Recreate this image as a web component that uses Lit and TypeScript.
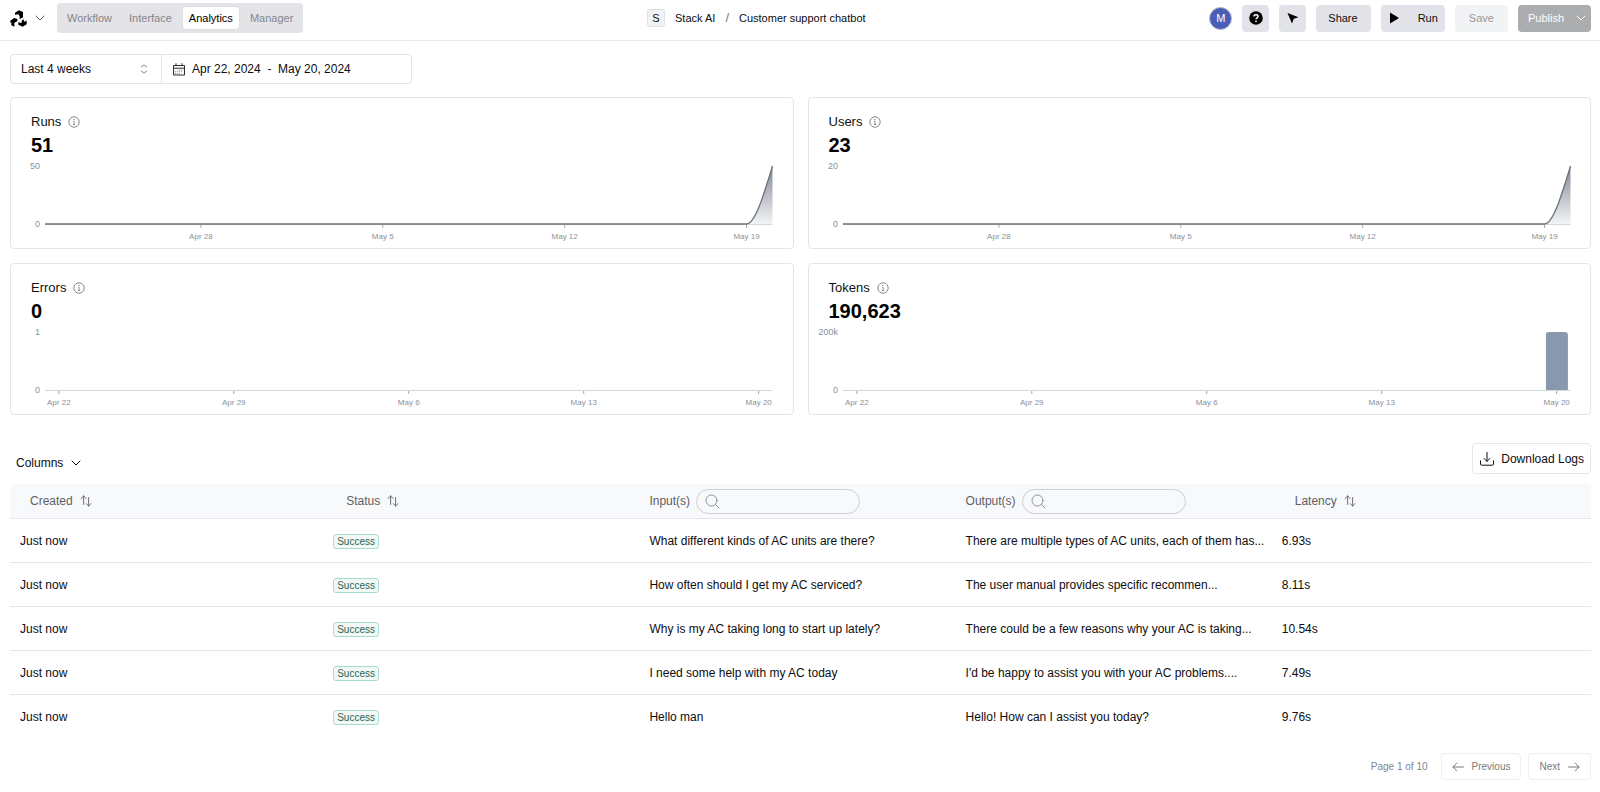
import { LitElement, html, svg, css, nothing } from "lit";
import { customElement, property } from "lit/decorators.js";

interface Tick {
  label: string;
  at: number;
}

interface Metric {
  title: string;
  value: string;
  max: string;
  kind: "area" | "bar" | "empty";
  ticks: Tick[];
}

const dayTicks: Tick[] = [
  { label: "Apr 28", at: 6 / 28 },
  { label: "May 5", at: 13 / 28 },
  { label: "May 12", at: 20 / 28 },
  { label: "May 19", at: 27 / 28 },
];

const weekTicks: Tick[] = ["Apr 22", "Apr 29", "May 6", "May 13", "May 20"].map(
  (label, i) => ({ label, at: 0.019 + i * 0.2405 })
);

const metrics: Metric[] = [
  { title: "Runs", value: "51", max: "50", kind: "area", ticks: dayTicks },
  { title: "Users", value: "23", max: "20", kind: "area", ticks: dayTicks },
  { title: "Errors", value: "0", max: "1", kind: "empty", ticks: weekTicks },
  { title: "Tokens", value: "190,623", max: "200k", kind: "bar", ticks: weekTicks },
];

const logs = [
  ["What different kinds of AC units are there?", "There are multiple types of AC units, each of them has...", "6.93s"],
  ["How often should I get my AC serviced?", "The user manual provides specific recommen...", "8.11s"],
  ["Why is my AC taking long to start up lately?", "There could be a few reasons why your AC is taking...", "10.54s"],
  ["I need some help with my AC today", "I'd be happy to assist you with your AC problems....", "7.49s"],
  ["Hello man", "Hello! How can I assist you today?", "9.76s"],
];

const base = css`
  * {
    box-sizing: border-box;
  }
  button,
  input,
  select {
    font: inherit;
    color: inherit;
    margin: 0;
    padding: 0;
    border: 0;
    background: none;
  }
  svg {
    display: block;
    flex: none;
  }
`;

const chevron = (w: number) => html`
  <svg width=${w} height=${w} viewBox="0 0 10 10" fill="none" stroke="currentColor" stroke-linecap="round" stroke-linejoin="round" aria-hidden="true">
    <path d="M1 3l4 4 4-4" />
  </svg>
`;

@customElement("metric-card")
export class MetricCard extends LitElement {
  @property({ attribute: false }) metric!: Metric;

  static styles = [
    base,
    css`
      :host {
        display: block;
        border: 1px solid #e4e5e8;
        border-radius: 4px;
        background: #fff;
        padding: 15px 20px 24px 34px;
      }
      .head {
        margin-left: -14px;
      }
      .title {
        display: flex;
        align-items: center;
        gap: 7px;
        margin: 0;
        font-size: 13px;
        font-weight: 400;
        line-height: 18px;
        color: #111;
      }
      .title svg {
        color: #85888e;
      }
      .value {
        font-size: 20px;
        font-weight: 700;
        line-height: 28px;
        color: #000;
      }
      .chart {
        width: 100%;
        height: 58px;
        margin-top: 7px;
        overflow: visible;
      }
      .y {
        font-size: 9px;
        fill: #8a9099;
        text-anchor: end;
      }
      .x {
        font-size: 8px;
        fill: #8a9099;
        text-anchor: middle;
      }
      .axis {
        stroke: #d4d7dc;
      }
      .tick {
        stroke: #a3a8af;
      }
      .line {
        fill: none;
        stroke: #6b727b;
        stroke-width: 1.3;
        vector-effect: non-scaling-stroke;
      }
      .bar {
        fill: #8898ad;
      }
    `,
  ];

  private area() {
    return svg`
      <defs>
        <linearGradient id="fade" x1="0" y1="0" x2="0" y2="1">
          <stop offset="0" stop-color="#6b7280" stop-opacity="0.85"></stop>
          <stop offset="1" stop-color="#6b7280" stop-opacity="0.08"></stop>
        </linearGradient>
      </defs>
      <svg width="100%" height="58" viewBox="0 0 28 58" preserveAspectRatio="none" overflow="visible">
        <path fill="url(#fade)" d="M27 58C27.33 58 27.66 29 28 0V58Z"></path>
        <path class="line" d="M0 58H27C27.33 58 27.66 29 28 0"></path>
      </svg>`;
  }

  render() {
    const m = this.metric;
    return html`
      <div class="head">
        <h2 class="title">
          ${m.title}
          <svg width="12" height="12" viewBox="0 0 12 12" fill="none" stroke="currentColor" aria-hidden="true">
            <circle cx="6" cy="6" r="5.2" />
            <path d="M5 5.3h1.1v3.2M4.9 8.5h2.4" stroke-width="0.9" />
            <circle cx="6" cy="3.5" r="0.7" fill="currentColor" stroke="none" />
          </svg>
        </h2>
        <div class="value">${m.value}</div>
      </div>
      <svg class="chart" role="img" aria-label=${m.title}>
        <line class="axis" x1="0" x2="100%" y1="58.5" y2="58.5"></line>
        ${m.ticks.map(
          (t) => svg`
            <line class="tick" x1="${t.at * 100}%" x2="${t.at * 100}%" y1="59" y2="62"></line>
            <text class="x" x="${t.at * 100}%" y="73">${t.label}</text>`
        )}
        <text class="y" x="-5" y="3">${m.max}</text>
        <text class="y" x="-5" y="61">0</text>
        ${m.kind === "area" ? this.area() : nothing}
        ${m.kind === "bar"
          ? svg`<svg x="96.6%" width="3.05%" height="58"><rect class="bar" width="100%" height="61" rx="3"></rect></svg>`
          : nothing}
      </svg>
    `;
  }
}

@customElement("app-root")
export class AppRoot extends LitElement {
  static styles = [
    base,
    css`
      :host {
        display: block;
        min-height: 100vh;
        background: #fff;
        color: #0d0d0f;
        font-family: "Liberation Sans", Helvetica, Arial, sans-serif;
        font-size: 12px;
        line-height: 16px;
      }
      .top {
        display: flex;
        align-items: flex-start;
        justify-content: space-between;
        padding: 3px 9px 7px 10px;
        border-bottom: 1px solid #e6e7ea;
        font-size: 11px;
      }
      .left,
      .crumbs,
      .actions,
      .brand {
        display: flex;
        align-items: center;
        height: 30px;
      }
      .brand {
        gap: 8px;
        margin-right: 12px;
      }
      .brand .caret {
        color: #6d7076;
      }
      .tabs {
        display: flex;
        align-items: center;
        gap: 5px;
        height: 30px;
        padding: 0 4px;
        border-radius: 4px;
        background: #e3e3e8;
      }
      .tab {
        height: 22px;
        padding: 0 6px;
        border-radius: 3px;
        color: #85868b;
      }
      .tab.on {
        background: #fff;
        color: #000;
        box-shadow: 0 0 1px #b9bac0;
      }
      .crumbs {
        gap: 10px;
      }
      .org {
        width: 18px;
        height: 18px;
        border: 1px solid #dfe0e4;
        border-radius: 3px;
        background: #f1f2f4;
        text-align: center;
      }
      .slash {
        color: #74767c;
        font-size: 13px;
      }
      .actions {
        gap: 10px;
      }
      .avatar {
        width: 23px;
        height: 23px;
        border: 1px solid #b9bdc9;
        border-radius: 50%;
        background: #4c5db8;
        color: #fff;
        text-align: center;
        line-height: 21px;
      }
      .btn {
        display: flex;
        align-items: center;
        justify-content: center;
        height: 27px;
        min-width: 27px;
        border-radius: 4px;
        background: #e2e3e8;
      }
      .share {
        padding: 0 13px 0 12px;
      }
      .run {
        gap: 18px;
        padding: 0 7px 0 8px;
      }
      .save {
        padding: 0 14px;
        background: #f2f3f5;
        color: #97999e;
      }
      .publish {
        gap: 12px;
        padding: 0 5px 0 10px;
        background: #acadaf;
        color: #fff;
      }
      main {
        padding: 13px 9px 12px 10px;
      }
      .range {
        display: flex;
        width: fit-content;
        height: 30px;
        border: 1px solid #e2e3e7;
        border-radius: 4px;
      }
      .period {
        position: relative;
        width: 151px;
        border-right: 1px solid #e2e3e7;
      }
      .period select {
        appearance: none;
        width: 100%;
        height: 100%;
        padding: 0 10px;
      }
      .period svg {
        position: absolute;
        right: 12px;
        top: 7px;
        pointer-events: none;
        color: #7b7e84;
      }
      .dates {
        display: flex;
        align-items: center;
        gap: 7px;
        width: 249px;
        padding: 0 11px;
        white-space: pre;
      }
      .cards {
        display: grid;
        grid-template-columns: 1fr 1fr;
        gap: 14px;
        margin-top: 13px;
      }
      .tools {
        display: flex;
        align-items: flex-end;
        justify-content: space-between;
        margin: 28px 0 10px;
      }
      .columns {
        display: flex;
        align-items: center;
        gap: 8px;
        height: 22px;
        padding: 0 6px;
      }
      .download {
        display: flex;
        align-items: center;
        gap: 6px;
        height: 31px;
        padding: 0 6px;
        border: 1px solid #e6e7ea;
        border-radius: 4px;
      }
      table {
        width: 100%;
        table-layout: fixed;
        border-collapse: separate;
        border-spacing: 0;
      }
      th,
      td {
        padding: 0 7px;
        border-bottom: 1px solid #e4e6e9;
        text-align: left;
        font-weight: 400;
        white-space: nowrap;
      }
      th {
        height: 35px;
        background: #f8f9fb;
        color: #5c5f65;
      }
      th:first-child {
        border-top-left-radius: 4px;
      }
      th:last-child {
        border-top-right-radius: 4px;
      }
      td {
        height: 44px;
      }
      td:first-child {
        padding-left: 10px;
      }
      tr:last-child td {
        border-bottom: 0;
      }
      .sort {
        display: flex;
        align-items: center;
        gap: 7px;
        padding: 0 13px;
      }
      .find {
        display: flex;
        align-items: center;
        gap: 6px;
      }
      .pill {
        display: flex;
        align-items: center;
        gap: 6px;
        width: 164px;
        height: 25px;
        padding: 0 8px;
        border: 1px solid #cdcfd3;
        border-radius: 13px;
        color: #8f9298;
      }
      .pill input {
        min-width: 0;
        flex: 1;
        outline: 0;
      }
      .badge {
        display: inline-block;
        padding: 0 3px;
        border: 1px solid #a5dfc7;
        border-radius: 3px;
        background: #f3f7f6;
        color: #27694f;
        font-size: 10px;
        line-height: 13px;
        vertical-align: middle;
      }
      .pager {
        display: flex;
        align-items: center;
        justify-content: flex-end;
        gap: 7px;
        margin-top: 14px;
        font-size: 10px;
        color: #7d8795;
      }
      .page {
        margin-right: 6px;
      }
      .step {
        display: flex;
        align-items: center;
        gap: 8px;
        height: 27px;
        padding: 0 10px;
        border: 1px solid #eceef0;
        border-radius: 4px;
        color: #777a80;
      }
    `,
  ];

  private sort(label: string) {
    return html`<button class="sort">
      ${label}
      <svg width="12" height="12" viewBox="0 0 12 12" fill="none" stroke="currentColor" stroke-width="0.9" stroke-linecap="round" stroke-linejoin="round" aria-hidden="true">
        <path d="M3.6 9.5V1M1 3.5L3.6 1l2.6 2.5M8.6 2.5V11M6.2 8.6L8.6 11l2.5-2.4" />
      </svg>
    </button>`;
  }

  private find(label: string, id: string) {
    return html`<div class="find">
      <label for=${id}>${label}</label>
      <span class="pill">
        <svg width="15" height="15" viewBox="0 0 15 15" fill="none" stroke="currentColor" stroke-linecap="round" aria-hidden="true">
          <circle cx="6.5" cy="6.5" r="5.5" />
          <path d="M10.5 10.5L14 14" />
        </svg>
        <input id=${id} type="text" />
      </span>
    </div>`;
  }

  render() {
    return html`
      <header class="top">
        <div class="left">
          <button class="brand" aria-label="Stack AI menu">
            <svg width="17" height="17" viewBox="0 0 51 51" fill="#000" aria-hidden="true">
              <path d="M15 8L27 1l12 5v16l-10 6v-9l-4-6-10 1z" />
              <path d="M1 32l11-8 10 3v7l-9 4v12L4 46V37l-3 2z" />
              <path d="M25 36l9 4 2-9 5-3 1 7 8-3v11l-12 7-13-6z" />
            </svg>
            <span class="caret">${chevron(10)}</span>
          </button>
          <nav class="tabs">
            <button class="tab">Workflow</button>
            <button class="tab">Interface</button>
            <button class="tab on" aria-current="page">Analytics</button>
            <button class="tab">Manager</button>
          </nav>
        </div>
        <div class="crumbs">
          <span class="org">S</span>
          <span>Stack AI</span>
          <span class="slash">/</span>
          <span>Customer support chatbot</span>
        </div>
        <div class="actions">
          <span class="avatar">M</span>
          <button class="btn" aria-label="Help">
            <svg width="14" height="14" viewBox="0 0 14 14" aria-hidden="true">
              <circle cx="7" cy="7" r="6.8" />
              <path d="M5 5.4C5 3.2 9 3.2 9 5.4 9 6.8 7 6.8 7 8.3" fill="none" stroke="#fff" stroke-width="1.5" />
              <circle cx="7" cy="10.3" r="0.9" fill="#fff" />
            </svg>
          </button>
          <button class="btn" aria-label="Pointer">
            <svg width="12" height="12" viewBox="0 0 12 12" aria-hidden="true">
              <path d="M0.5 1l11 4.2-4.7 1.6L5 11.5z" />
            </svg>
          </button>
          <button class="btn share">Share</button>
          <button class="btn run">
            <svg width="11" height="12" viewBox="0 0 11 12" aria-hidden="true"><path d="M1 0.5L10 6 1 11.5z" /></svg>
            Run
          </button>
          <button class="btn save">Save</button>
          <button class="btn publish">Publish ${chevron(10)}</button>
        </div>
      </header>

      <main>
        <div class="range">
          <div class="period">
            <select aria-label="Period">
              <option>Last 4 weeks</option>
            </select>
            <svg width="10" height="14" viewBox="0 0 10 14" fill="none" stroke="currentColor" stroke-width="0.9" stroke-linecap="round" stroke-linejoin="round" aria-hidden="true">
              <path d="M2.3 5L5 2.8 7.7 5M2.3 9L5 11.2 7.7 9" />
            </svg>
          </div>
          <button class="dates">
            <svg width="12" height="13" viewBox="0 0 12 13" fill="none" stroke="#2c2d30" aria-hidden="true">
              <path d="M0.5 2.5h11v9.5h-11zM0.5 5.2h11M3 0.3V2.5M9 0.3V2.5" />
              <path d="M5.5 7h4.8M1.8 8.7h8.4M1.8 10.4h5" stroke="#8b8d92" stroke-width="0.9" stroke-dasharray="1.2 0.9" />
            </svg>
            <span>Apr 22, 2024  -  May 20, 2024</span>
          </button>
        </div>

        <section class="cards">
          ${metrics.map((m) => html`<metric-card .metric=${m}></metric-card>`)}
        </section>

        <div class="tools">
          <button class="columns">Columns ${chevron(10)}</button>
          <button class="download">
            <svg width="16" height="16" viewBox="0 0 16 16" fill="none" stroke="currentColor" stroke-linecap="round" stroke-linejoin="round" aria-hidden="true">
              <path d="M8 1.5v8.7M5 7.4l3 3 3-3M1.5 9.8v3.4q0 1 1 1h11q1 0 1-1V9.8" />
            </svg>
            Download Logs
          </button>
        </div>

        <table>
          <thead>
            <tr>
              <th>${this.sort("Created")}</th>
              <th>${this.sort("Status")}</th>
              <th>${this.find("Input(s)", "find-input")}</th>
              <th>${this.find("Output(s)", "find-output")}</th>
              <th>${this.sort("Latency")}</th>
            </tr>
          </thead>
          <tbody>
            ${logs.map(
              ([input, output, latency]) => html`<tr>
                <td>Just now</td>
                <td><span class="badge">Success</span></td>
                <td>${input}</td>
                <td>${output}</td>
                <td>${latency}</td>
              </tr>`
            )}
          </tbody>
        </table>

        <div class="pager">
          <span class="page">Page 1 of 10</span>
          <button class="step">
            <svg width="12" height="10" viewBox="0 0 12 10" fill="none" stroke="currentColor" stroke-linecap="round" stroke-linejoin="round" aria-hidden="true">
              <path d="M11.5 5H1M4.8 1L1 5l3.8 4" />
            </svg>
            Previous
          </button>
          <button class="step">
            Next
            <svg width="12" height="10" viewBox="0 0 12 10" fill="none" stroke="currentColor" stroke-linecap="round" stroke-linejoin="round" aria-hidden="true">
              <path d="M0.5 5H11M7.2 1L11 5 7.2 9" />
            </svg>
          </button>
        </div>
      </main>
    `;
  }
}
